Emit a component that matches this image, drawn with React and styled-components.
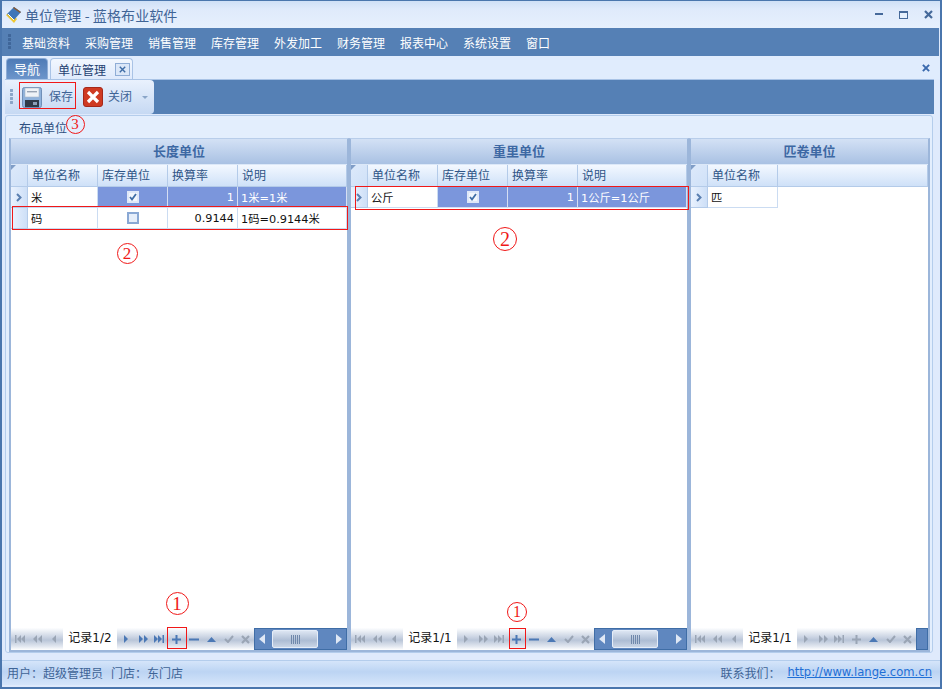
import React from 'react';
import styled, { createGlobalStyle } from 'styled-components';

const GlobalStyle = createGlobalStyle`
  html, body { margin: 0; padding: 0; background: #dfeafc; }
  body { font-family: "Noto Sans CJK SC", "DejaVu Sans", sans-serif; font-size: 12px; }
`;

const Window = styled.div`
  position: relative;
  width: 942px;
  height: 689px;
  box-sizing: border-box;
  border: 2px solid #4a76ad;
  border-top-width: 1px;
  background: #dfeafc;
  display: flex;
  flex-direction: column;
  overflow: hidden;
`;

const TitleBar = styled.div`
  height: 27px;
  flex: none;
  display: flex;
  align-items: center;
  padding: 0 5px 0 3px;
  background: linear-gradient(#cfe0f6 0, #dfeafb 30%, #e6f0fd 100%);
`;

const AppTitle = styled.div`
  margin-left: 1px;
  font-size: 14px;
  color: #3f6496;
  flex: 1;
  letter-spacing: 0.1px;
`;

const WinButtons = styled.div`
  display: flex;
  align-items: center;
  gap: 16px;
  padding-right: 2px;
`;

const MenuBar = styled.div`
  height: 28px;
  flex: none;
  display: flex;
  align-items: center;
  background: #5580b5;
  padding-left: 6px;
  margin-right: 1px;
`;

const Grip = styled.div`
  width: 3px;
  height: ${p => p.$h}px;
  flex: none;
  background-image: radial-gradient(circle at 1.5px 1.5px, ${p => p.$c} 1.4px, transparent 1.6px);
  background-size: 3px 4px;
`;

const MenuItem = styled.div`
  color: #fff;
  font-size: 12px;
  width: 63px;
  text-align: left;
`;

const MenuList = styled.div`
  display: flex;
  margin-left: 11px;
`;

const TabStrip = styled.div`
  height: 23px;
  flex: none;
  display: flex;
  align-items: flex-end;
  gap: 2px;
  padding: 0 9px 0 4px;
  background: #e0ecfd;
`;

const NavTab = styled.div`
  width: 42px;
  height: 21px;
  box-sizing: border-box;
  border: 1px solid #8fadd6;
  border-bottom: none;
  border-radius: 4px 4px 0 0;
  background: linear-gradient(#4e7bb6, #6c95cb);
  color: #fff;
  font-size: 13px;
  line-height: 20px;
  text-align: center;
`;

const ActiveTab = styled.div`
  width: 83px;
  height: 21px;
  box-sizing: border-box;
  border: 1px solid #a9c3e6;
  border-bottom: none;
  border-radius: 4px 4px 0 0;
  background: linear-gradient(#f2f7fe, #dfeafc);
  color: #1f3f70;
  display: flex;
  align-items: center;
  padding-left: 7px;
  gap: 9px;
`;

const TabClose = styled.div`
  width: 15px;
  height: 13px;
  box-sizing: border-box;
  border: 1px solid #8fadd6;
  background: #dbe7f8;
  display: flex;
  align-items: center;
  justify-content: center;
`;

const StripClose = styled.div`
  margin-left: auto;
  align-self: center;
  display: flex;
  padding-top: 1px;
  padding-right: 1px;
`;

const Body = styled.div`
  flex: 1;
  min-height: 0;
  display: flex;
  flex-direction: column;
  padding: 0 6px 0 3px;
`;

const ToolbarBand = styled.div`
  height: 35px;
  flex: none;
  background: #5580b5;
  display: flex;
  margin-bottom: 1px;
  border-top: 1px solid #a9c3e6;
  box-sizing: border-box;
`;

const Toolbar = styled.div`
  width: 149px;
  box-sizing: border-box;
  display: flex;
  align-items: center;
  padding-left: 5px;
  border-radius: 0 4px 4px 0;
  background: linear-gradient(#e9f1fd, #c6d9f3);
`;

const ToolButton = styled.div`
  display: flex;
  align-items: center;
  gap: ${p => p.$gap}px;
  color: #3f6496;
  margin-left: ${p => p.$ml}px;
  font-size: 12px;
  line-height: 16px;
`;

const ToolText = styled.span`
  margin-bottom: 2px;
`;

const DropCaret = styled.div`
  width: 0;
  height: 0;
  margin-left: 10px;
  border-left: 3px solid transparent;
  border-right: 3px solid transparent;
  border-top: 3px solid #8aa5c8;
`;

const Page = styled.div`
  flex: 1;
  min-height: 0;
  box-sizing: border-box;
  border: 1px solid #b4cdec;
  border-radius: 3px;
  margin: 0 1px 7px 0;
  display: flex;
  flex-direction: column;
  background: #e3eefd;
  padding: 0 2px 0 4px;
`;

const PageLabel = styled.div`
  height: 22px;
  flex: none;
  color: #2c4f80;
  line-height: 23px;
  padding-left: 9px;
  font-size: 12px;
`;

const Panels = styled.div`
  flex: 1;
  min-height: 0;
  display: grid;
  grid-template-columns: 340px 340px 241px;
  margin-left: -1px;
`;

const Panel = styled.div`
  border: 2px solid #9cb6da;
  border-top: 1px solid #b8cdea;
  background: #fff;
  display: flex;
  flex-direction: column;
  min-width: 0;
`;

const PanelTitle = styled.div`
  height: 26px;
  flex: none;
  box-sizing: border-box;
  border-bottom: 1px solid #dce8f8;
  background: linear-gradient(#d3e1f5, #a9c1e3);
  color: #3d68a3;
  font-weight: 700;
  font-size: 13px;
  line-height: 23px;
  text-align: center;
`;

const GridArea = styled.div`
  flex: 1;
  min-height: 0;
  background: #fff;
`;

const Row = styled.div`
  display: grid;
  grid-template-columns: ${p => p.$cols};
  height: ${p => p.$h}px;
  box-sizing: border-box;
`;

const HeadCell = styled.div`
  box-sizing: border-box;
  background: linear-gradient(#f3f8ff, #cfe1f8);
  border-right: 1px solid #b4cbe9;
  border-bottom: 1px solid #b4cbe9;
  color: #2f5587;
  padding-left: 4px;
  line-height: 19px;
  font-size: 12px;
`;

const Corner = styled(HeadCell)`
  padding: 0;
  background: linear-gradient(135deg, #7f9dc7 0, #7f9dc7 3px, #dbe8fa 4px, #cfe1f8 100%);
`;

const Indicator = styled.div`
  box-sizing: border-box;
  background: linear-gradient(90deg, #eaf2fe, #cddff7);
  border-right: 1px solid #b4cbe9;
  border-bottom: 1px solid #b4cbe9;
  display: flex;
  align-items: center;
  justify-content: center;
`;

const Cell = styled.div`
  box-sizing: border-box;
  display: flex;
  align-items: center;
  justify-content: ${p => p.$align || 'flex-start'};
  padding: 0 3px;
  font-family: "DejaVu Sans", "Noto Sans CJK SC", sans-serif;
  font-size: 11.3px;
  background: ${p => (p.$selected ? '#7b96dc' : '#fff')};
  color: ${p => (p.$selected ? '#fff' : '#111')};
  border-right: 1px solid ${p => (p.$selected ? '#d5def3' : '#cbdcf2')};
  border-bottom: 1px solid ${p => (p.$selected ? '#d5def3' : '#cbdcf2')};
  white-space: nowrap;
`;

const Check = styled.div`
  width: 12px;
  height: 12px;
  box-sizing: border-box;
  border: 2px solid ${p => (p.$selected ? '#dfe8f8' : '#8aa8d4')};
  background: ${p => (p.$selected ? '#f2f6fd' : '#e6eefa')};
  display: flex;
  align-items: center;
  justify-content: center;
`;

const NavBar = styled.div`
  height: 22px;
  flex: none;
  display: flex;
  align-items: stretch;
  background: linear-gradient(#fdfeff 0, #d2dae7 35%, #b9c5d8 55%, #e4e9f1 85%, #fff 100%);
`;

const NavBtn = styled.div`
  width: ${p => p.$w}px;
  flex: none;
  display: flex;
  align-items: center;
  justify-content: center;
`;

const RecordLabel = styled.div`
  width: 54px;
  flex: none;
  background: #fff;
  font-family: "DejaVu Sans", "Noto Sans CJK SC", sans-serif;
  font-size: 12px;
  color: #111;
  line-height: 21px;
  text-align: center;
  white-space: nowrap;
`;

const ScrollBar = styled.div`
  flex: 1;
  min-width: 0;
  box-sizing: border-box;
  border: 1px solid #3f6da6;
  background: #5f87bf;
  display: flex;
  align-items: stretch;
`;

const ScrollArrow = styled.div`
  width: ${p => p.$w}px;
  flex: ${p => (p.$grow ? 1 : 'none')};
  display: flex;
  align-items: center;
  justify-content: ${p => (p.$end ? 'flex-end' : 'flex-start')};
  padding: 0 4px;
  box-sizing: border-box;
`;

const ScrollThumb = styled.div`
  width: 46px;
  flex: none;
  margin: 1px 0;
  box-sizing: border-box;
  border: 1px solid #e5edf8;
  border-radius: 2px;
  background: linear-gradient(#dce5f2, #adbdd4 60%, #c9d5e6);
  display: flex;
  align-items: center;
  justify-content: center;
  gap: 1px;
`;

const ThumbLine = styled.div`
  width: 1px;
  height: 9px;
  background: #6f88ab;
`;

const StatusBar = styled.div`
  height: 25px;
  margin-bottom: 2px;
  flex: none;
  box-sizing: border-box;
  border-top: 1px solid #b4cdec;
  display: flex;
  align-items: center;
  justify-content: space-between;
  padding: 0 8px 2px 5px;
  background: linear-gradient(#d5e5fa, #bcd4f3 45%, #d5e5fa);
  color: #3f6496;
  font-size: 12px;
`;

const StatusGroup = styled.div`
  display: flex;
  align-items: center;
  gap: ${p => p.$gap}px;
`;

const Link = styled.a`
  color: #1f6fd6;
  text-decoration: underline;
  font-family: "DejaVu Sans", sans-serif;
  font-size: 11.6px;
`;

const Mark = styled.div`
  position: absolute;
  left: ${p => p.$x}px;
  top: ${p => p.$y}px;
  width: ${p => p.$w}px;
  height: ${p => p.$h}px;
  box-sizing: border-box;
  border: 1px solid #f01818;
  pointer-events: none;
`;

const Bubble = styled.div`
  position: absolute;
  left: ${p => p.$x - p.$d / 2}px;
  top: ${p => p.$y - p.$d / 2}px;
  width: ${p => p.$d}px;
  height: ${p => p.$d}px;
  box-sizing: border-box;
  border: 1px solid #f01818;
  border-radius: 50%;
  color: #f01818;
  font-family: "Liberation Serif", serif;
  font-size: ${p => p.$d - 4}px;
  line-height: ${p => p.$d - 2}px;
  text-align: center;
`;

const AppIcon = () => (
  <svg width="19" height="19" viewBox="0 0 19 19">
    <path d="M1 10 L7 16 L9 18 L12 14 L5 7 Z" fill="#f0c830" />
    <path d="M2 9 L9 2 L16 7 L9 15 Z" fill="#3f76b8" />
    <path d="M9 2 L16 7 L15 8 L8 3 Z" fill="#8a5a30" />
    <path d="M3 9 L9 15" stroke="#fff" strokeWidth="1" />
  </svg>
);

const MinIcon = () => (
  <svg width="8" height="3" viewBox="0 0 8 3"><rect width="8" height="2" fill="#45699a" /></svg>
);

const MaxIcon = () => (
  <svg width="9" height="8" viewBox="0 0 9 8">
    <rect x="0.5" y="0.5" width="8" height="7" fill="#e6f0fd" stroke="#45699a" />
    <rect width="9" height="2" fill="#45699a" />
  </svg>
);

const XIcon = ({ size = 9, color = '#45699a', w = 2.2 }) => (
  <svg width={size} height={size} viewBox="0 0 9 9">
    <path d="M1 1 L8 8 M8 1 L1 8" stroke={color} strokeWidth={w} fill="none" />
  </svg>
);

const SaveIcon = () => (
  <svg width="20" height="21" viewBox="0 0 20 21">
    <rect x="0.5" y="0.5" width="19" height="20" rx="2" fill="#8fb2dc" stroke="#6f8fb8" />
    <rect x="3" y="1" width="14" height="9" fill="#eef2f7" stroke="#a8b6c8" strokeWidth="0.6" />
    <rect x="5" y="4" width="10" height="1.4" fill="#98a4b4" />
    <rect x="3" y="13" width="14" height="7" fill="#303a48" />
    <rect x="11" y="15" width="4" height="3" fill="#8da0b8" />
  </svg>
);

const CloseIcon = () => (
  <svg width="20" height="20" viewBox="0 0 20 20">
    <rect x="0.5" y="0.5" width="19" height="19" rx="2.5" fill="#cf3a22" stroke="#a5281a" />
    <path d="M5 5 L15 15 M15 5 L5 15" stroke="#fff" strokeWidth="3.2" />
  </svg>
);

const RowArrow = () => (
  <svg width="6" height="9" viewBox="0 0 6 9">
    <path d="M1 1 L4.5 4.5 L1 8" stroke="#5a7fb0" strokeWidth="2" fill="none" />
  </svg>
);

const Tick = ({ color = '#3f6da6' }) => (
  <svg width="8" height="8" viewBox="0 0 8 8">
    <path d="M1 4 L3 6.5 L7 1" stroke={color} strokeWidth="1.8" fill="none" />
  </svg>
);

const tri = (dir, x, c) => (
  <path
    key={x}
    d={dir < 0 ? `M${x + 4} 0 L${x + 4} 8 L${x} 4 Z` : `M${x} 0 L${x} 8 L${x + 4} 4 Z`}
    fill={c}
  />
);

// transport-style arrows in the record navigator
const NavIcon = ({ kind, color }) => {
  if (kind === 'first') {
    return (
      <svg width="10" height="8" viewBox="0 0 10 8">
        <rect width="1.5" height="8" fill={color} />{tri(-1, 2, color)}{tri(-1, 6, color)}
      </svg>
    );
  }
  if (kind === 'prevPage') return <svg width="9" height="8" viewBox="0 0 9 8">{tri(-1, 0, color)}{tri(-1, 5, color)}</svg>;
  if (kind === 'prev') return <svg width="5" height="8" viewBox="0 0 5 8">{tri(-1, 0, color)}</svg>;
  if (kind === 'next') return <svg width="5" height="8" viewBox="0 0 5 8">{tri(1, 0, color)}</svg>;
  if (kind === 'nextPage') return <svg width="9" height="8" viewBox="0 0 9 8">{tri(1, 0, color)}{tri(1, 5, color)}</svg>;
  if (kind === 'last') {
    return (
      <svg width="10" height="8" viewBox="0 0 10 8">
        {tri(1, 0, color)}{tri(1, 4, color)}<rect x="8.5" width="1.5" height="8" fill={color} />
      </svg>
    );
  }
  if (kind === 'add') {
    return <svg width="9" height="9" viewBox="0 0 9 9"><path d="M4.5 0 V9 M0 4.5 H9" stroke={color} strokeWidth="2" /></svg>;
  }
  if (kind === 'remove') return <svg width="10" height="3" viewBox="0 0 10 3"><rect width="10" height="2" y="0.5" fill={color} /></svg>;
  if (kind === 'up') return <svg width="9" height="5" viewBox="0 0 9 5"><path d="M0 5 L4.5 0 L9 5 Z" fill={color} /></svg>;
  if (kind === 'ok') return <svg width="10" height="8" viewBox="0 0 10 8"><path d="M1 4 L4 7 L9 1" stroke={color} strokeWidth="2" fill="none" /></svg>;
  return <XIcon size={9} color={color} w={2.2} />;
};

const BLUE = '#4b78b5';
const GREY = '#9aa5b5';

const Navigator = ({ record, active, editable }) => (
  <NavBar>
    <NavBtn $w={18}><NavIcon kind="first" color={GREY} /></NavBtn>
    <NavBtn $w={17}><NavIcon kind="prevPage" color={GREY} /></NavBtn>
    <NavBtn $w={17}><NavIcon kind="prev" color={GREY} /></NavBtn>
    <RecordLabel>记录{record}</RecordLabel>
    <NavBtn $w={18}><NavIcon kind="next" color={active ? BLUE : GREY} /></NavBtn>
    <NavBtn $w={16}><NavIcon kind="nextPage" color={active ? BLUE : GREY} /></NavBtn>
    <NavBtn $w={16}><NavIcon kind="last" color={active ? BLUE : GREY} /></NavBtn>
    <NavBtn $w={18}><NavIcon kind="add" color={editable ? BLUE : GREY} /></NavBtn>
    {editable && <NavBtn $w={18}><NavIcon kind="remove" color={BLUE} /></NavBtn>}
    <NavBtn $w={17}><NavIcon kind="up" color={BLUE} /></NavBtn>
    <NavBtn $w={17}><NavIcon kind="ok" color={GREY} /></NavBtn>
    <NavBtn $w={17}><NavIcon kind="cancel" color={GREY} /></NavBtn>
    <ScrollBar>
      {editable && (
        <>
          <ScrollArrow $w={17}>
            <svg width="6" height="10" viewBox="0 0 6 10"><path d="M6 0 V10 L0 5 Z" fill="#dfe8f5" /></svg>
          </ScrollArrow>
          <ScrollThumb>
            <ThumbLine /><ThumbLine /><ThumbLine /><ThumbLine /><ThumbLine />
          </ScrollThumb>
          <ScrollArrow $grow $end>
            <svg width="6" height="10" viewBox="0 0 6 10"><path d="M0 0 V10 L6 5 Z" fill="#dfe8f5" /></svg>
          </ScrollArrow>
        </>
      )}
    </ScrollBar>
  </NavBar>
);

const COLS = '17px 70px 70px 70px 1fr';

const UnitRow = ({ name, checked, rate, note, selected, current }) => (
  <Row $cols={COLS} $h={21}>
    <Indicator>{current && <RowArrow />}</Indicator>
    <Cell>{name}</Cell>
    <Cell $selected={selected} $align="center">
      <Check $selected={selected}>{checked && <Tick />}</Check>
    </Cell>
    <Cell $selected={selected} $align="flex-end">{rate}</Cell>
    <Cell $selected={selected}>{note}</Cell>
  </Row>
);

const UnitHead = () => (
  <Row $cols={COLS} $h={22}>
    <Corner />
    <HeadCell>单位名称</HeadCell>
    <HeadCell>库存单位</HeadCell>
    <HeadCell>换算率</HeadCell>
    <HeadCell>说明</HeadCell>
  </Row>
);

const menus = ['基础资料', '采购管理', '销售管理', '库存管理', '外发加工', '财务管理', '报表中心', '系统设置', '窗口'];

export default function App() {
  return (
    <>
      <GlobalStyle />
      <Window>
        <TitleBar>
          <AppIcon />
          <AppTitle>单位管理 - 蓝格布业软件</AppTitle>
          <WinButtons>
            <MinIcon />
            <MaxIcon />
            <XIcon />
          </WinButtons>
        </TitleBar>

        <MenuBar>
          <Grip $h={16} $c="#3f6699" />
          <MenuList>
            {menus.map(m => <MenuItem key={m}>{m}</MenuItem>)}
          </MenuList>
        </MenuBar>

        <TabStrip>
          <NavTab>导航</NavTab>
          <ActiveTab>
            单位管理
            <TabClose><XIcon size={7} color="#3f6da6" w={1.8} /></TabClose>
          </ActiveTab>
          <StripClose><XIcon size={8} color="#3a69ad" w={2.2} /></StripClose>
        </TabStrip>

        <Body>
          <ToolbarBand>
            <Toolbar>
              <Grip $h={16} $c="#8aa5c8" />
              <ToolButton $ml={9} $gap={7}><SaveIcon /><ToolText>保存</ToolText></ToolButton>
              <ToolButton $ml={10} $gap={5}><CloseIcon /><ToolText>关闭</ToolText></ToolButton>
              <DropCaret />
            </Toolbar>
          </ToolbarBand>

          <Page>
            <PageLabel>布品单位</PageLabel>
            <Panels>
              <Panel>
                <PanelTitle>长度单位</PanelTitle>
                <UnitHead />
                <GridArea>
                  <UnitRow name="米" checked rate="1" note="1米=1米" selected current />
                  <UnitRow name="码" rate="0.9144" note="1码=0.9144米" />
                </GridArea>
                <Navigator record="1/2" active editable />
              </Panel>
              <Panel>
                <PanelTitle>重里单位</PanelTitle>
                <UnitHead />
                <GridArea>
                  <UnitRow name="公斤" checked rate="1" note="1公斤=1公斤" selected current />
                </GridArea>
                <Navigator record="1/1" editable />
              </Panel>
              <Panel>
                <PanelTitle>匹卷单位</PanelTitle>
                <Row $cols="17px 70px 1fr" $h={22}>
                  <Corner />
                  <HeadCell>单位名称</HeadCell>
                  <HeadCell />
                </Row>
                <GridArea>
                  <Row $cols="17px 70px" $h={21}>
                    <Indicator><RowArrow /></Indicator>
                    <Cell>匹</Cell>
                  </Row>
                </GridArea>
                <Navigator record="1/1" />
              </Panel>
            </Panels>
          </Page>
        </Body>

        <StatusBar>
          <StatusGroup $gap={8}>
            <span>用户：超级管理员</span>
            <span>门店：东门店</span>
          </StatusGroup>
          <StatusGroup $gap={7}>
            <span>联系我们：</span>
            <Link>http://www.lange.com.cn</Link>
          </StatusGroup>
        </StatusBar>

        <Mark $x={17} $y={81} $w={57} $h={27} />
        <Mark $x={10} $y={205} $w={336} $h={24} />
        <Mark $x={353} $y={185} $w={334} $h={24} />
        <Mark $x={165} $y={626} $w={20} $h={22} />
        <Mark $x={507} $y={627} $w={17} $h={21} />
        <Bubble $x={73} $y={123} $d={19}>3</Bubble>
        <Bubble $x={125} $y={252} $d={21}>2</Bubble>
        <Bubble $x={503} $y={238} $d={24}>2</Bubble>
        <Bubble $x={175} $y={602} $d={23}>1</Bubble>
        <Bubble $x={515} $y={611} $d={20}>1</Bubble>
      </Window>
    </>
  );
}
